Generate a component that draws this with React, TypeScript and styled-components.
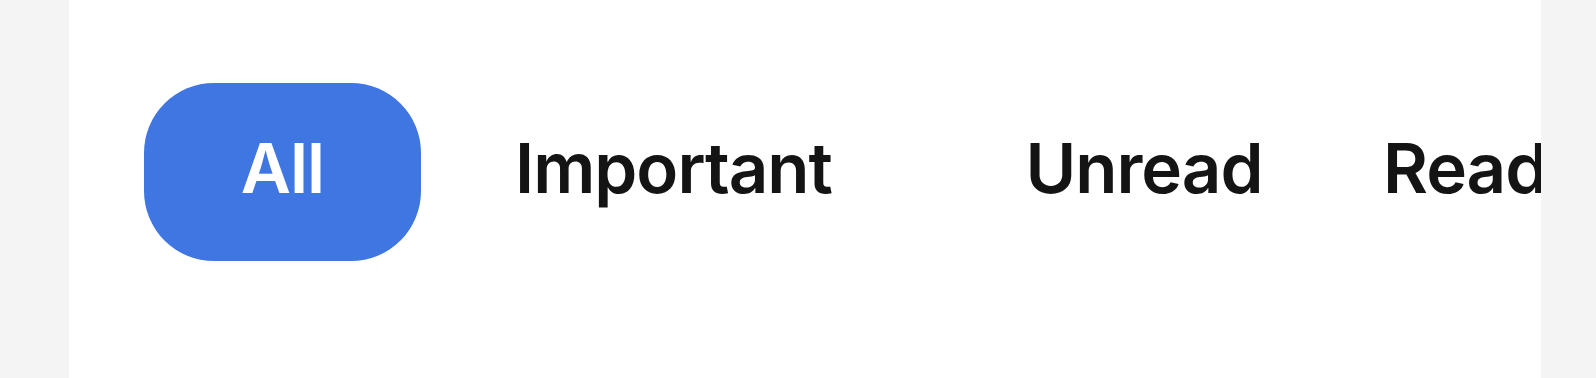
import React from "react";
import styled, { createGlobalStyle } from "styled-components";

const GlobalStyle = createGlobalStyle`
  html, body {
    margin: 0;
    padding: 0;
    background: #f4f4f4;
  }
  body {
    font-family: "Inter", "Noto Sans", sans-serif;
  }
`;

const Panel = styled.main`
  margin: 0 55px 0 69px;
  height: 378px;
  background: #ffffff;
  overflow: hidden;
`;

const TabList = styled.nav`
  display: flex;
  align-items: center;
  padding: 83px 0 0 75px;
  white-space: nowrap;
`;

const Tab = styled.button<{ $active?: boolean; $width: number; $align?: "center" | "left" }>`
  flex: 0 0 ${(p) => p.$width}px;
  width: ${(p) => p.$width}px;
  height: 178px;
  border: 0;
  margin: 0;
  padding: 0 0 8px ${(p) => (p.$align === "left" ? 21 : 0)}px;
  display: flex;
  align-items: center;
  justify-content: ${(p) => (p.$align === "left" ? "flex-start" : "center")};
  border-radius: 70px;
  background: ${(p) => (p.$active ? "#3f76e2" : "transparent")};
  color: ${(p) => (p.$active ? "#ffffff" : "#141414")};
  font-family: "Inter", "Noto Sans", sans-serif;
  font-size: 69px;
  font-weight: 600;
  letter-spacing: -1px;
  line-height: 1;
  cursor: pointer;
`;

const tabs = [
  { label: "All", width: 277, active: true },
  { label: "Important", width: 505 },
  { label: "Unread", width: 436 },
  { label: "Read", width: 300, align: "left" as const },
];

export default function App() {
  return (
    <>
      <GlobalStyle />
      <Panel>
        <TabList>
          {tabs.map((t) => (
            <Tab key={t.label} $active={t.active} $width={t.width} $align={t.align}>
              {t.label}
            </Tab>
          ))}
        </TabList>
      </Panel>
    </>
  );
}
